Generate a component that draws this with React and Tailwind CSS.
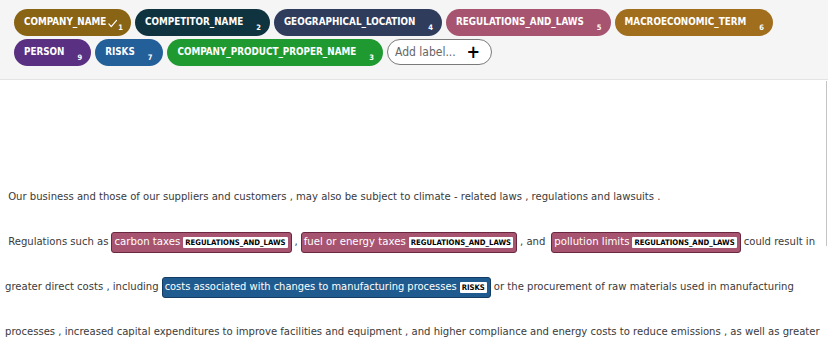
const FONT = "font-['DejaVu_Sans',sans-serif] font-stretch-condensed";

const chips1 = [
  { name: "COMPANY_NAME", n: "1", bg: "bg-[#8a6415]", check: true },
  { name: "COMPETITOR_NAME", n: "2", bg: "bg-[#0f3440]" },
  { name: "GEOGRAPHICAL_LOCATION", n: "4", bg: "bg-[#2f3c5c]" },
  { name: "REGULATIONS_AND_LAWS", n: "5", bg: "bg-[#a65470]" },
  { name: "MACROECONOMIC_TERM", n: "6", bg: "bg-[#a06e1d]" },
];
const chips2 = [
  { name: "PERSON", n: "9", bg: "bg-[#5a3182]" },
  { name: "RISKS", n: "7", bg: "bg-[#23609a]", wide: true },
  { name: "COMPANY_PRODUCT_PROPER_NAME", n: "3", bg: "bg-[#1f9a31]" },
];

function Chip({ name, n, bg, check, wide }) {
  return (
    <div className={`h-[27px] rounded-[14px] ${bg} text-white flex items-center pl-[10px] ${wide ? "pr-[11px]" : check ? "pr-[8px]" : "pr-[9px]"}`}>
      <span className="text-[9.8px] font-bold">{name}</span>
      {check ? (
        <svg width="9" height="9" viewBox="0 0 10 9" className="ml-[2px] mt-[2px]" fill="none" stroke="white" strokeWidth="1.3" strokeLinecap="round" strokeLinejoin="round">
          <path d="M1 5 L3.6 8 L9.5 1" />
        </svg>
      ) : null}
      <span className={`text-[7.5px] font-bold self-end mb-[3px] ${check ? "ml-[1px]" : "ml-[13px]"}`}>{n}</span>
    </div>
  );
}

function Tag({ text, label, bg, border, size }) {
  return (
    <span className={`inline-flex items-center h-[21px] rounded-[3px] border ${bg} ${border} pl-[2px] pr-[3px] mx-[3px] text-white ${size}`}>
      <span>{text}</span>
      <span className="ml-[3px] bg-white text-black text-[7.7px] font-bold h-[11px] px-[2px] flex items-center rounded-[1px]">{label}</span>
    </span>
  );
}

const REG = { bg: "bg-[#a65470]", border: "border-[#6a2740]", size: "text-[11.3px]" };
const RISK = { bg: "bg-[#1f5b8e]", border: "border-[#123c63]", size: "text-[11px]" };

export default function App() {
  return (
    <div className={`${FONT} w-[828px] h-[349px] overflow-hidden bg-white relative`}>
      <div className="bg-[#f5f5f5] border-b border-[#e4e4e4] pt-[9px] pl-[14px] h-[80px]">
        <div className="flex gap-[4px]">
          {chips1.map((c) => (
            <Chip key={c.name} {...c} />
          ))}
        </div>
        <div className="flex gap-[4px] mt-[3px]">
          {chips2.map((c) => (
            <Chip key={c.name} {...c} />
          ))}
          <div className="h-[26px] w-[105px] rounded-[13px] border border-[#7a7a7a] bg-white flex items-center pl-[7px] pr-[11px] justify-between">
            <span className="text-[12px] text-[#666]">Add label...</span>
            <span className="text-[18px] leading-none font-bold text-black -mt-[1px]">+</span>
          </div>
        </div>
      </div>
      <div className="pt-[95px] pl-[5px] text-[11.2px] text-[#3a3a3a] whitespace-pre">
        <div className="h-[45px] flex items-center">
          {" Our business and those of our suppliers and customers , may also be subject to climate - related laws , regulations and lawsuits ."}
        </div>
        <div className="h-[45px] flex items-center">
          <span>{" Regulations such as"}</span>
          <Tag text="carbon taxes" label="REGULATIONS_AND_LAWS" {...REG} />
          <span>{","}</span>
          <Tag text="fuel or energy taxes" label="REGULATIONS_AND_LAWS" {...REG} />
          <span>{", and"}</span>
          <span className="w-[3px]" />
          <Tag text="pollution limits" label="REGULATIONS_AND_LAWS" {...REG} />
          <span>{"could result in"}</span>
        </div>
        <div className="h-[45px] flex items-center">
          <span>{"greater direct costs , including"}</span>
          <Tag text="costs associated with changes to manufacturing processes" label="RISKS" {...RISK} />
          <span>{"or the procurement of raw materials used in manufacturing"}</span>
        </div>
        <div className="h-[45px] flex items-center">
          {"processes , increased capital expenditures to improve facilities and equipment , and higher compliance and energy costs to reduce emissions , as well as greater"}
        </div>
      </div>
      <div className="absolute right-[1px] top-[81px] h-[165px] w-[1px] bg-[#c4c4c4]" />
    </div>
  );
}
